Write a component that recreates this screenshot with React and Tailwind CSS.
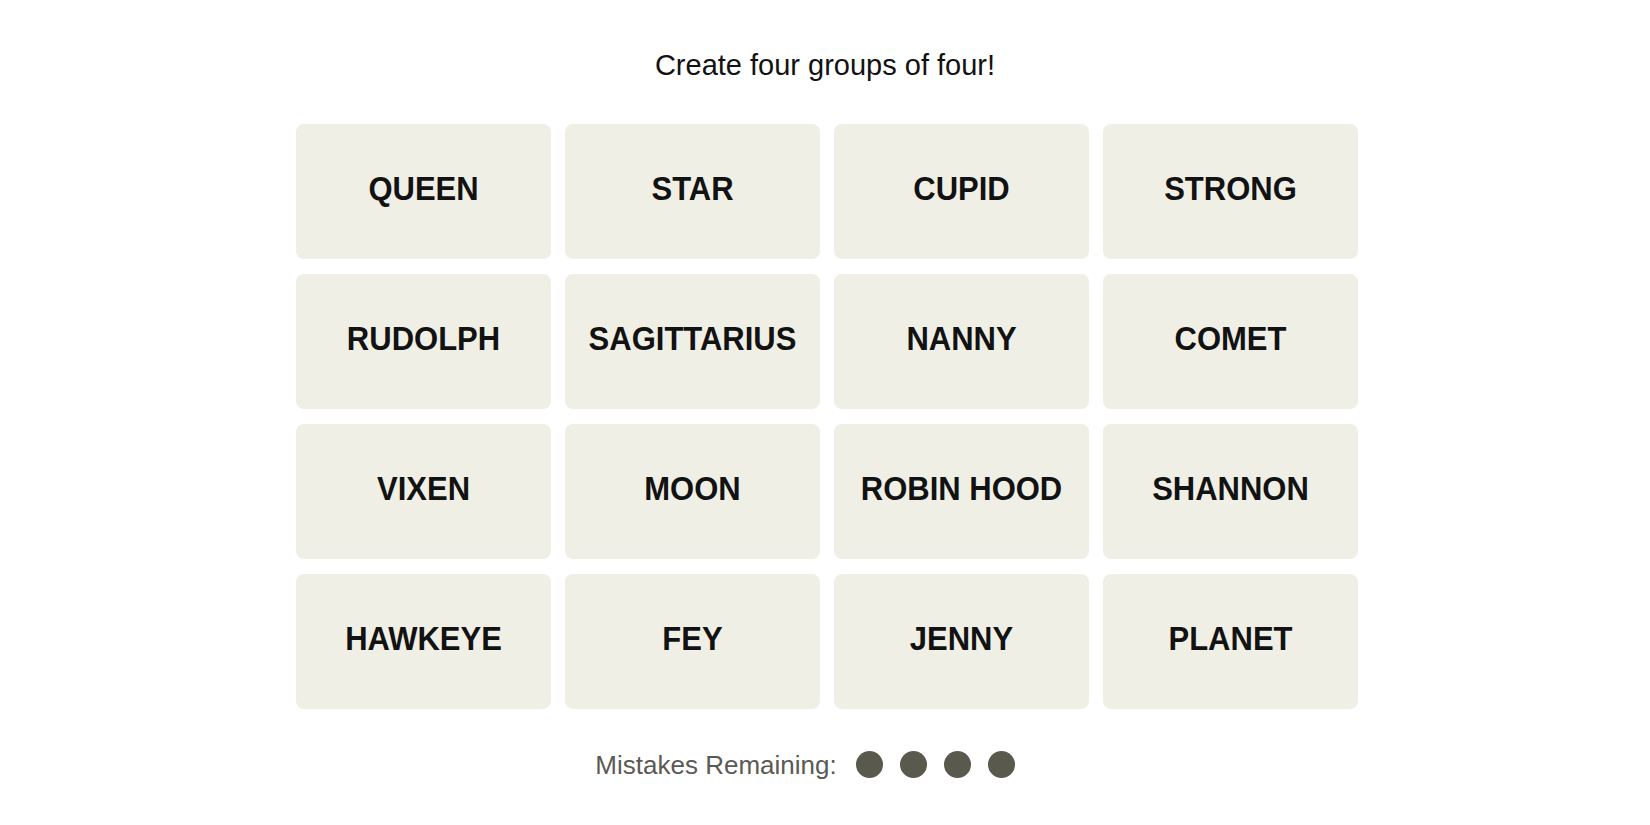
const words = [
  'QUEEN', 'STAR', 'CUPID', 'STRONG',
  'RUDOLPH', 'SAGITTARIUS', 'NANNY', 'COMET',
  'VIXEN', 'MOON', 'ROBIN HOOD', 'SHANNON',
  'HAWKEYE', 'FEY', 'JENNY', 'PLANET',
]

const Tile = ({ word }) => (
  <button className="flex h-[135px] items-center justify-center rounded-lg bg-[#efefe6] pb-1">
    <span className="inline-block scale-y-[1.1] text-[31px] font-bold text-[#121212]">{word}</span>
  </button>
)

function App() {
  return (
    <div className="min-h-screen bg-white font-['Liberation_Sans',Arial,sans-serif]">
      <div className="pt-[51px] text-center text-[29px] leading-[29px] text-[#121212]">
        Create four groups of four!
      </div>

      <div className="mt-[44px] flex justify-center pl-[4px]">
        <div className="grid w-[1062px] grid-cols-4 gap-x-[14px] gap-y-[15px]">
          {words.map((w) => (
            <Tile key={w} word={w} />
          ))}
        </div>
      </div>

      <div className="mt-[42px] flex h-[27px] items-center justify-center pr-[40px]">
        <span className="text-[26px] leading-[26px] text-[#5a5a55]">Mistakes Remaining:</span>
        <div className="ml-[19px] flex gap-[17px]">
          {[0, 1, 2, 3].map((i) => (
            <span key={i} className="h-[27px] w-[27px] rounded-full bg-[#5a594e]" />
          ))}
        </div>
      </div>
    </div>
  )
}

export default App
